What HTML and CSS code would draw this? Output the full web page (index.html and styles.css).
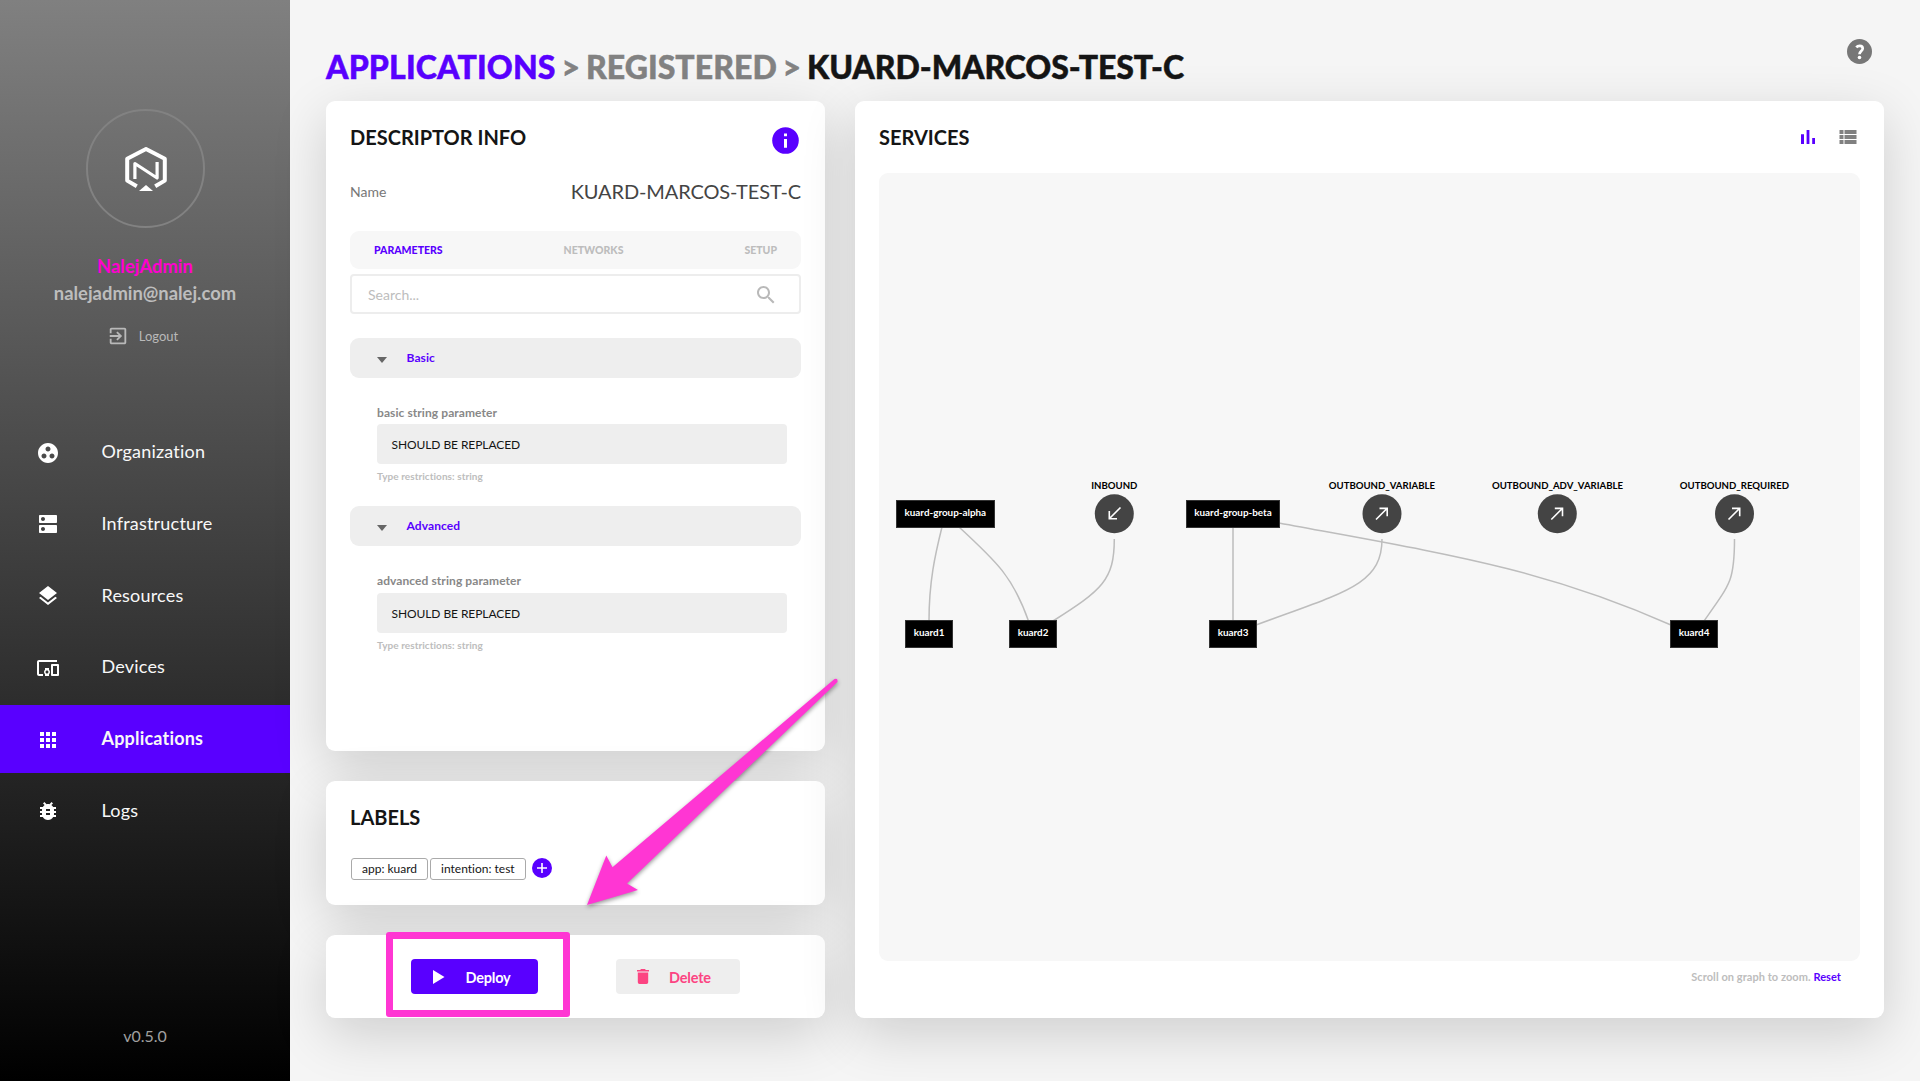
FILE: index.html
```html
<!DOCTYPE html>
<html lang="en">
<head>
<meta charset="utf-8">
<title>Applications</title>
<link rel="stylesheet" href="styles.css">
</head>
<body>
<div class="app">
  <aside class="sidebar">
    <div class="avatar">
      <svg width="42" height="45" viewBox="0 0 42 45" fill="none" stroke="#fff">
        <path d="M11.8 39.300L2.200 33.600V11.800L21 2L39.800 11.800V33.600L30.200 39.300" stroke-width="4" stroke-linejoin="round"/>
        <path d="M9.900 32V16.500L32.100 31V15" stroke-width="3.200" stroke-linejoin="round"/>
        <path d="M21 38L28 44H14Z" fill="#fff" stroke="none"/>
      </svg>
    </div>
    <div class="user-name">NalejAdmin</div>
    <div class="user-mail">nalejadmin@nalej.com</div>
    <div class="logout">
      <svg width="22" height="22" viewBox="0 0 24 24" fill="#b9b9b9"><path d="M10.090 15.590L11.500 17l5-5-5-5-1.410 1.410L12.670 11H3v2h9.670l-2.580 2.590zM19 3H5c-1.110 0-2 .9-2 2v4h2V5h14v14H5v-4H3v4c0 1.100.89 2 2 2h14c1.100 0 2-.9 2-2V5c0-1.100-.9-2-2-2z"/></svg>
      <span>Logout</span>
    </div>
    <nav class="nav">
      <a class="nav-item"><svg class="nav-icon" viewBox="0 0 24 24"><path d="M12 2C6.480 2 2 6.480 2 12s4.480 10 10 10 10-4.480 10-10S17.520 2 12 2zM8 17.500c-1.380 0-2.500-1.120-2.500-2.500s1.120-2.500 2.500-2.500 2.500 1.120 2.500 2.500-1.120 2.500-2.500 2.500zM9.500 8c0-1.380 1.120-2.500 2.500-2.500s2.500 1.120 2.500 2.500-1.120 2.500-2.500 2.500S9.500 9.380 9.500 8zm6.500 9.500c-1.380 0-2.500-1.120-2.500-2.500s1.120-2.500 2.500-2.500 2.500 1.120 2.500 2.500-1.120 2.500-2.500 2.500z"/></svg>Organization</a>
      <a class="nav-item"><svg class="nav-icon" viewBox="0 0 24 24"><path d="M20 13H4c-.55 0-1 .45-1 1v6c0 .55.45 1 1 1h16c.55 0 1-.45 1-1v-6c0-.55-.45-1-1-1zM7 19c-1.100 0-2-.9-2-2s.9-2 2-2 2 .9 2 2-.9 2-2 2zM20 3H4c-.55 0-1 .45-1 1v6c0 .55.45 1 1 1h16c.55 0 1-.45 1-1V4c0-.55-.45-1-1-1zM7 9c-1.100 0-2-.9-2-2s.9-2 2-2 2 .9 2 2-.9 2-2 2z"/></svg>Infrastructure</a>
      <a class="nav-item"><svg class="nav-icon" viewBox="0 0 24 24"><path d="M11.990 18.540l-7.370-5.730L3 14.070l9 7 9-7-1.630-1.270-7.380 5.740zM12 16l7.360-5.730L21 9l-9-7-9 7 1.630 1.270L12 16z"/></svg>Resources</a>
      <a class="nav-item"><svg class="nav-icon" viewBox="0 0 24 24"><path d="M3 6h18V4H3c-1.100 0-2 .9-2 2v12c0 1.100.9 2 2 2h4v-2H3V6zm10 6H9v1.780c-.61.55-1 1.330-1 2.220s.39 1.670 1 2.220V20h4v-1.780c.61-.55 1-1.340 1-2.220s-.39-1.670-1-2.220V12zm-2 5.500c-.83 0-1.500-.67-1.500-1.500s.67-1.500 1.500-1.500 1.500.67 1.500 1.500-.67 1.500-1.500 1.500zM22 8h-6c-.5 0-1 .5-1 1v10c0 .5.5 1 1 1h6c.5 0 1-.5 1-1V9c0-.5-.5-1-1-1zm-1 10h-4v-8h4v8z"/></svg>Devices</a>
      <a class="nav-item nav-active"><svg class="nav-icon" viewBox="0 0 24 24"><path d="M4 8h4V4H4v4zm6 12h4v-4h-4v4zm-6 0h4v-4H4v4zm0-6h4v-4H4v4zm6 0h4v-4h-4v4zm6-10v4h4V4h-4zm-6 4h4V4h-4v4zm6 6h4v-4h-4v4zm0 6h4v-4h-4v4z"/></svg>Applications</a>
      <a class="nav-item"><svg class="nav-icon" viewBox="0 0 24 24"><path d="M20 8h-2.810c-.45-.78-1.070-1.450-1.820-1.960L17 4.410 15.590 3l-2.170 2.170C12.960 5.060 12.490 5 12 5c-.49 0-.96.06-1.410.17L8.410 3 7 4.410l1.620 1.630C7.880 6.550 7.260 7.220 6.810 8H4v2h2.090c-.05.33-.09.66-.09 1v1H4v2h2v1c0 .34.04.67.09 1H4v2h2.810c1.040 1.790 2.970 3 5.190 3s4.150-1.210 5.190-3H20v-2h-2.090c.05-.33.09-.66.09-1v-1h2v-2h-2v-1c0-.34-.04-.67-.09-1H20V8zm-6 8h-4v-2h4v2zm0-4h-4v-2h4v2z"/></svg>Logs</a>
    </nav>
    <div class="version">v0.5.0</div>
  </aside>

  <main class="main">
    <header class="page-head">
      <h1 class="crumbs"><span class="crumb-link">APPLICATIONS</span><span class="crumb-dim"> &gt; REGISTERED &gt; </span>KUARD-MARCOS-TEST-C</h1>
      <svg class="help" width="25" height="25" viewBox="0 0 25 25"><circle cx="12.500" cy="12.500" r="12.500" fill="#777"/><path d="M9.300 8.300C10.300 7.100 11.500 6.900 12.700 6.900C14.500 6.900 15.700 7.900 15.700 9.500C15.700 12.100 12.500 12 12.500 15.300" fill="none" stroke="#fff" stroke-width="2.700"/><circle cx="12.500" cy="18.500" r="1.800" fill="#fff"/></svg>
    </header>
    <div class="columns">
      <div class="left">
        <section class="card info">
          <div class="card-head">
            <h2 class="title">DESCRIPTOR INFO</h2>
            <svg class="info-icon" width="27" height="27" viewBox="0 0 27 27"><circle cx="13.500" cy="13.500" r="13.300" fill="#5900ff"/><path d="M12 6.500h3v2.700h-3zM12 12h3v8.700h-3z" fill="#fff"/></svg>
          </div>
          <div class="name-row"><span class="name-label">Name</span><span class="name-value">KUARD-MARCOS-TEST-C</span></div>
          <div class="tabs"><span class="tab-on">PARAMETERS</span><span>NETWORKS</span><span>SETUP</span></div>
          <div class="search"><span>Search...</span>
            <svg class="search-icon" width="24" height="24" viewBox="0 0 24 24" fill="#b9b9b9"><path d="M15.500 14h-.79l-.28-.27C15.410 12.590 16 11.110 16 9.500 16 5.910 13.090 3 9.500 3S3 5.910 3 9.500 5.910 16 9.500 16c1.610 0 3.090-.59 4.230-1.570l.27.28v.79l5 4.990L20.490 19l-4.990-5zm-6 0C7.010 14 5 11.990 5 9.500S7.010 5 9.500 5 14 7.010 14 9.500 11.990 14 9.500 14z"/></svg>
          </div>
          <div class="group group-first"><i class="caret"></i>Basic</div>
          <div class="field">
            <div class="field-label">basic string parameter</div>
            <div class="field-value">SHOULD BE REPLACED</div>
            <div class="field-hint">Type restrictions: string</div>
          </div>
          <div class="group"><i class="caret"></i>Advanced</div>
          <div class="field field-adv">
            <div class="field-label">advanced string parameter</div>
            <div class="field-value">SHOULD BE REPLACED</div>
            <div class="field-hint">Type restrictions: string</div>
          </div>
        </section>

        <section class="card labels">
          <h2 class="title">LABELS</h2>
          <div class="chips">
            <span class="chip">app: kuard</span>
            <span class="chip">intention: test</span>
            <svg class="add" width="20" height="20" viewBox="0 0 20 20"><circle cx="10" cy="10" r="10" fill="#5900ff"/><path d="M10 5v10M5 10h10" stroke="#fff" stroke-width="1.600"/></svg>
          </div>
        </section>

        <section class="card actions">
          <div class="btn btn-deploy">
            <svg width="12" height="14" viewBox="0 0 12 14"><path d="M0 0L11.500 7L0 14Z" fill="#fff"/></svg>
            <span class="btn-text">Deploy</span>
          </div>
          <div class="btn btn-delete">
            <svg width="12" height="15" viewBox="0 0 12 15" fill="#fc4482"><path d="M0 .9H3.200L4 0H8L8.800.9H12V2.600H0ZM.8 3.600H11.200V13.300Q11.200 15 9.500 15H2.500Q.8 15 .8 13.300Z"/></svg>
            <span class="btn-text">Delete</span>
          </div>
        </section>
      </div>

      <section class="card services">
        <div class="services-head">
          <h2 class="title">SERVICES</h2>
          <div class="views">
            <svg width="24" height="24" viewBox="0 0 24 24" fill="#5900ff"><path d="M5 9.200h3V19H5zM10.600 5h2.800v14h-2.800zm5.600 8H19v6h-2.800z"/></svg>
            <svg width="25" height="24" viewBox="0 0 24 24" fill="#808080"><path d="M4 14h4v-4H4v4zm0 5h4v-4H4v4zM4 9h4V5H4v4zm5 5h12v-4H9v4zm0 5h12v-4H9v4zM9 5v4h12V5H9z"/></svg>
          </div>
        </div>
        <div class="graph">
          <svg width="981" height="788" viewBox="879 173 981 788">
            <g class="edges">
              <path d="M942 527C935 555 929 582 929 621"/>
              <path d="M959 527C997 562 1013 577 1028.500 621"/>
              <path d="M1114.300 539C1114.300 580 1102 590 1053 621"/>
              <path d="M1233 527V621"/>
              <path d="M1382 539C1382 585 1345 592 1256 625"/>
              <path d="M1279 523C1440 553 1540 567 1671 625"/>
              <path d="M1734.500 539C1734.500 580 1731 583 1704 621"/>
            </g>
            <g class="boxes">
              <rect x="896.500" y="500.500" width="98" height="27"/>
              <rect x="1186.500" y="500.500" width="93" height="27"/>
              <rect x="905.500" y="620.500" width="47" height="27"/>
              <rect x="1009.500" y="620.500" width="47" height="27"/>
              <rect x="1209.500" y="620.500" width="47" height="27"/>
              <rect x="1670.500" y="620.500" width="47" height="27"/>
            </g>
            <g class="box-text">
              <text x="945.300" y="516">kuard-group-alpha</text>
              <text x="1233" y="516">kuard-group-beta</text>
              <text x="929" y="636">kuard1</text>
              <text x="1033" y="636">kuard2</text>
              <text x="1233" y="636">kuard3</text>
              <text x="1694" y="636">kuard4</text>
            </g>
            <g fill="#444">
              <circle cx="1114.300" cy="513.700" r="19.500"/>
              <circle cx="1382" cy="513.700" r="19.500"/>
              <circle cx="1557.300" cy="513.700" r="19.500"/>
              <circle cx="1734.500" cy="513.700" r="19.500"/>
            </g>
            <g class="arrows">
              <path d="M1120.500 507.500L1109.500 518.500M1109.300 511V518.800H1117"/>
              <path d="M1376 519.500L1387 508.500M1379.500 508.400H1387.200V516.200"/>
              <path d="M1551.300 519.500L1562.300 508.500M1554.800 508.400H1562.500V516.200"/>
              <path d="M1728.500 519.500L1739.500 508.500M1732 508.400H1739.700V516.200"/>
            </g>
            <g class="port-text">
              <text x="1114.300" y="489">INBOUND</text>
              <text x="1381.900" y="489">OUTBOUND_VARIABLE</text>
              <text x="1557.500" y="489">OUTBOUND_ADV_VARIABLE</text>
              <text x="1734.400" y="489">OUTBOUND_REQUIRED</text>
            </g>
          </svg>
        </div>
        <div class="graph-foot">Scroll on graph to zoom. <span>Reset</span></div>
      </section>
    </div>
  </main>

  <div class="highlight"></div>
  <svg class="pointer" width="270" height="250" viewBox="580 670 270 250">
    <path d="M587 905L606.300 855.500L612.500 867.300L834.500 679Q838 677.500 837.500 682L627 883.500L638 890Z" fill="#ff36d3"/>
  </svg>
</div>
</body>
</html>
```
FILE: styles.css
```css
* { box-sizing: border-box; }
body {
  margin: 0;
  font-family: Lato, "Open Sans", sans-serif;
  font-variant-ligatures: none;
  color: #151515;
  background: #f5f5f5;
}
h1, h2 { margin: 0; }
svg { display: block; flex: none; }
.app {
  position: relative;
  display: flex;
  width: 1920px;
  height: 1081px;
  overflow: hidden;
}

/* Sidebar */
.sidebar {
  display: flex;
  flex-direction: column;
  align-items: center;
  width: 290px;
  height: 1081px;
  padding-top: 109px;
  background: linear-gradient(#808080, #000);
}
.avatar {
  display: flex;
  align-items: center;
  justify-content: center;
  width: 119px;
  height: 119px;
  padding: 2px 0 0 2px;
  border: 2px solid #828282;
  border-radius: 50%;
}
.user-name, .user-mail {
  font-size: 18.400px;
  font-weight: 700;
  line-height: 27px;
}
.user-name { margin-top: 25px; color: #ff00d0; }
.user-mail { color: #bdbdbd; }
.logout {
  display: flex;
  align-items: center;
  gap: 10px;
  height: 22px;
  margin: 18px 5px 0 0;
  font-size: 13px;
  color: #b9b9b9;
}
.nav {
  display: flex;
  flex-direction: column;
  gap: 3.750px;
  width: 100%;
  margin-top: 71px;
}
.nav-item {
  display: flex;
  align-items: center;
  gap: 41.500px;
  height: 68px;
  padding: 0 0 2px 36px;
  font-size: 18px;
  letter-spacing: .2px;
  color: #f8f8f8;
}
.nav-icon {
  width: 24px;
  height: 24px;
  fill: #fff;
  margin-top: 3px;
}
.nav-active { background: #5900ff; font-weight: 700; }
.version {
  margin: auto 0 35px;
  font-size: 16px;
  line-height: 20px;
  color: #a0a0a0;
}

/* Page */
.main { flex: 1; padding: 0 36px 63px; }
.page-head {
  display: flex;
  justify-content: space-between;
  height: 101px;
  padding-right: 12px;
}
.crumbs {
  padding-top: 48px;
  font-family: "Lato Black", Lato, sans-serif;
  font-size: 32px;
  font-weight: 900;
  line-height: 38px;
  letter-spacing: -.07px;
  white-space: pre;
  -webkit-text-stroke: .5px currentColor;
}
.crumb-link { letter-spacing: .17px; color: #5900ff; }
.crumb-dim { letter-spacing: .05px; word-spacing: -1.850px; color: #828282; }
.help { margin-top: 39px; }
.columns {
  display: grid;
  grid-template-columns: 499px 1029px;
  gap: 30px;
  height: 917px;
}
.left {
  display: grid;
  grid-template-rows: 650px 124px 83px;
  gap: 30px;
}
.card {
  border-radius: 9px;
  background: #fff;
  box-shadow: 0 16px 54px rgba(0, 0, 0, .16);
}
.title { font-size: 20px; font-weight: 700; line-height: 24px; }

/* Descriptor */
.info { padding: 24px 24px 0; }
.card-head { display: flex; justify-content: space-between; height: 51px; }
.info-icon { margin: 2px 2px 0 0; }
.name-row {
  display: flex;
  align-items: center;
  justify-content: space-between;
  height: 30px;
}
.name-label { font-size: 14px; color: #777; }
.name-value { font-size: 20px; letter-spacing: -.12px; color: #444; }
.tabs {
  display: flex;
  align-items: center;
  justify-content: space-between;
  height: 38px;
  margin-top: 25px;
  padding: 0 24px;
  border-radius: 9px;
  background: #f7f7f7;
  font-family: "Lato Black", Lato, sans-serif;
  font-size: 10.500px;
  font-weight: 900;
  color: #bdbdbd;
}
.tab-on { color: #5900ff; }
.search {
  display: flex;
  align-items: center;
  justify-content: space-between;
  height: 40px;
  margin-top: 5px;
  padding: 0 21px 0 16px;
  border: 2px solid #ededed;
  border-radius: 4px;
  font-size: 14px;
  color: #bdbdbd;
}
.search-icon { margin-top: 1px; }
.group {
  display: flex;
  align-items: center;
  gap: 19.500px;
  height: 40px;
  padding: 0 0 2px 27px;
  border-radius: 9px;
  background: #eee;
  font-size: 12px;
  font-weight: 700;
  letter-spacing: .1px;
  color: #5900ff;
}
.group-first { margin-top: 24px; }
.caret {
  margin-top: 6px;
  border: 5.500px solid transparent;
  border-top: 6px solid #666;
  border-bottom: 0;
}
.field { height: 128px; padding: 27px 14px 0 27px; }
.field-label {
  height: 19px;
  font-size: 12px;
  font-weight: 700;
  line-height: 16px;
  letter-spacing: .08px;
  color: #888;
}
.field-adv .field-label { height: 20px; }
.field-value {
  height: 40px;
  padding-left: 14.500px;
  border-radius: 4px;
  background: #eee;
  font-size: 12px;
  line-height: 41px;
  letter-spacing: -.08px;
}
.field-hint {
  padding-top: 5px;
  font-size: 10px;
  font-weight: 700;
  line-height: 14px;
  letter-spacing: .06px;
  color: #bdbdbd;
}

/* Labels */
.labels { padding: 24px 24px 0; }
.chips { display: flex; gap: 2px; margin: 29px 0 0 1px; }
.chip {
  height: 22px;
  padding: 0 10px;
  border: 1px solid #aaa;
  border-radius: 3px;
  font-size: 12px;
  line-height: 20px;
}
.add { margin-left: 4px; }

/* Actions */
.actions {
  display: flex;
  gap: 78px;
  padding: 24px 0 0 85px;
}
.btn {
  display: flex;
  align-items: center;
  gap: 20.500px;
  height: 35px;
  border-radius: 4px;
  font-size: 14.500px;
  font-weight: 700;
  letter-spacing: -.2px;
}
.btn-text { padding-top: 2px; }
.btn-deploy { width: 127px; padding-left: 22px; color: #fff; background: #5900ff; }
.btn-delete { width: 124px; padding-left: 20.500px; color: #fc4482; background: #eee; }

/* Services */
.services { padding: 24px 24px 0; }
.services-head { display: flex; justify-content: space-between; height: 48px; }
.views { display: flex; gap: 15px; }
.graph { height: 788px; border-radius: 9px; background: #f7f7f7; }
.edges { fill: none; stroke: #bdbdbd; stroke-width: 1.500; }
.boxes { fill: #000; stroke: #333; stroke-width: 1; }
.box-text { fill: #fff; font-size: 9.900px; font-weight: 700; text-anchor: middle; }
.port-text { fill: #000; font-size: 9.600px; font-weight: 700; text-anchor: middle; }
.arrows { fill: none; stroke: #fff; stroke-width: 1.600; }
.graph-foot {
  padding: 8px 19px 0 0;
  font-size: 11px;
  font-weight: 700;
  line-height: 15px;
  letter-spacing: .06px;
  text-align: right;
  color: #bdbdbd;
}
.graph-foot span { color: #5900ff; }

/* Annotations laid over the page */
.highlight {
  position: absolute;
  left: 386px;
  top: 932px;
  width: 184px;
  height: 85px;
  border: 7px solid #ff36d3;
  border-radius: 3px;
}
.pointer {
  position: absolute;
  left: 580px;
  top: 670px;
  filter: drop-shadow(0 2px 2px rgba(0, 0, 0, .4));
}
```
